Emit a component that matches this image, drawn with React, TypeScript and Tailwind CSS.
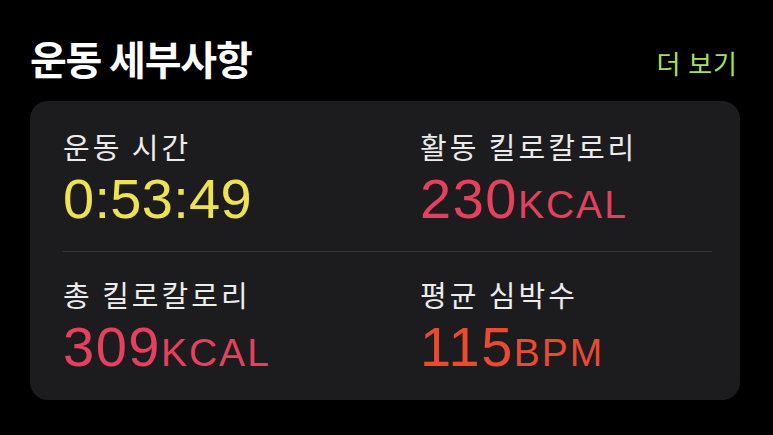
import React, { FC } from 'react';

type Stat = {
  label: string;
  value: string;
  unit?: string;
  color: string;
};

const stats: Stat[] = [
  { label: '운동 시간', value: '0:53:49', color: 'text-[#ede350]' },
  { label: '활동 킬로칼로리', value: '230', unit: 'KCAL', color: 'text-[#e5405e]' },
  { label: '총 킬로칼로리', value: '309', unit: 'KCAL', color: 'text-[#e5405e]' },
  { label: '평균 심박수', value: '115', unit: 'BPM', color: 'text-[#ea4a32]' },
];

const korean = { fontFamily: '"Noto Sans CJK KR", "Noto Sans", sans-serif' };
const latin = { fontFamily: '"Liberation Sans", Arial, sans-serif' };

const StatCell: FC<{ stat: Stat }> = ({ stat }) => (
  <div className="flex flex-col">
    <div className="text-[29px] leading-none tracking-[3px] text-[#ececec]" style={korean}>
      {stat.label}
    </div>
    <div className={`mt-[10px] leading-none ${stat.color}`} style={latin}>
      <span className={stat.unit ? 'text-[56px] leading-none tracking-[1.5px]' : 'text-[56px] leading-none tracking-[0.3px]'}>
        {stat.value}
      </span>
      {stat.unit && (
        <span className="text-[39px] leading-none tracking-[2px]">{stat.unit}</span>
      )}
    </div>
  </div>
);

const App: FC = () => (
  <div className="w-[773px] h-[435px] bg-black overflow-hidden">
    <div className="flex items-end justify-between pl-[30px] pr-[35px] pt-[38px]">
      <h1 className="text-[40px] font-bold leading-none text-white tracking-[-1.2px]" style={korean}>
        운동 세부사항
      </h1>
      <span className="text-[26px] leading-none tracking-[1px] text-[#a6e05c] mb-[2px]" style={korean}>
        더 보기
      </span>
    </div>

    <div className="ml-[30px] mt-[23px] w-[710px] rounded-[18px] bg-[#1c1c1e] pl-[33px] pr-[28px] pt-[31px] pb-[25px]">
      <div className="grid grid-cols-[357px_1fr]">
        <StatCell stat={stats[0]} />
        <StatCell stat={stats[1]} />
      </div>
      <div className="mt-[24px] mb-[28px] h-px bg-[#38383a]" />
      <div className="grid grid-cols-[357px_1fr]">
        <StatCell stat={stats[2]} />
        <StatCell stat={stats[3]} />
      </div>
    </div>
  </div>
);

export default App;
